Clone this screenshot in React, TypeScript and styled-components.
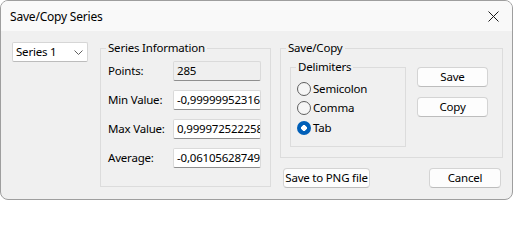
import React, { useState } from 'react'
import styled, { createGlobalStyle, css } from 'styled-components'

const GlobalStyle = createGlobalStyle`
  html, body {
    margin: 0;
    padding: 0;
    background: #ffffff;
  }
  body {
    font-family: "Noto Sans", "Liberation Sans", sans-serif;
    font-size: 11.5px;
    letter-spacing: -0.2px;
    color: #000000;
  }
`

type Delimiter = 'semicolon' | 'comma' | 'tab'

const infoRows = [
  { label: 'Points:', value: '285', readOnly: true },
  { label: 'Min Value:', value: '-0,99999952316', readOnly: false },
  { label: 'Max Value:', value: '0,999972522258', readOnly: false },
  { label: 'Average:', value: '-0,06105628749', readOnly: false }
]

const delimiters: { key: Delimiter, label: string }[] = [
  { key: 'semicolon', label: 'Semicolon' },
  { key: 'comma', label: 'Comma' },
  { key: 'tab', label: 'Tab' }
]

const App = () => {
  const [delimiter, setDelimiter] = useState<Delimiter>('tab')

  return (
    <>
      <GlobalStyle />
      <Window>
        <TitleBar>
          <TitleText>Save/Copy Series</TitleText>
          <CloseButton>
            <svg width="11" height="11" viewBox="0 0 11 11">
              <path d="M0.5 0.5 L10.5 10.5 M10.5 0.5 L0.5 10.5" stroke="#1a1a1a" strokeWidth="1" fill="none" />
            </svg>
          </CloseButton>
        </TitleBar>
        <Body>
          <Combo>
            <span>Series 1</span>
            <svg width="9" height="5" viewBox="0 0 9 5">
              <path d="M0.5 0.5 L4.5 4.5 L8.5 0.5" stroke="#606060" strokeWidth="1" fill="none" />
            </svg>
          </Combo>

          <InfoGroup>
            <Legend>Series Information</Legend>
            <InfoGrid>
              {infoRows.map(row => (
                <React.Fragment key={row.label}>
                  <FieldLabel>{row.label}</FieldLabel>
                  <TextBox readOnly={row.readOnly}>{row.value}</TextBox>
                </React.Fragment>
              ))}
            </InfoGrid>
          </InfoGroup>

          <RightColumn>
            <SaveGroup>
              <Legend>Save/Copy</Legend>
              <SaveContent>
                <DelimiterGroup>
                  <Legend>Delimiters</Legend>
                  <RadioList>
                    {delimiters.map(d => (
                      <RadioRow key={d.key} onClick={() => setDelimiter(d.key)}>
                        <RadioCircle checked={delimiter === d.key} />
                        <span>{d.label}</span>
                      </RadioRow>
                    ))}
                  </RadioList>
                </DelimiterGroup>
                <ButtonColumn>
                  <Button width={71}>Save</Button>
                  <Button width={71}>Copy</Button>
                </ButtonColumn>
              </SaveContent>
            </SaveGroup>
            <BottomRow>
              <Button width={87}>Save to PNG file</Button>
              <Button width={72}>Cancel</Button>
            </BottomRow>
          </RightColumn>
        </Body>
      </Window>
    </>
  )
}

const Window = styled.div`
  width: 513px;
  height: 200px;
  box-sizing: border-box;
  border: 1px solid #9e9e9e;
  border-radius: 8px;
  overflow: hidden;
  background: #f0f0f0;
  display: flex;
  flex-direction: column;
`

const TitleBar = styled.div`
  height: 30px;
  flex-shrink: 0;
  background: #f9f9f9;
  display: flex;
  align-items: center;
  justify-content: space-between;
  padding: 0 9px 0 9px;
`

const TitleText = styled.div`
  font-size: 12px;
  line-height: 14px;
  padding-top: 1px;
`

const CloseButton = styled.div`
  width: 11px;
  height: 11px;
  display: flex;
  margin-right: 4px;
  margin-top: 1px;
`

const Body = styled.div`
  flex: 1;
  display: flex;
  align-items: flex-start;
  padding: 10px 0 0 11px;
`

const Combo = styled.div`
  width: 76px;
  height: 20px;
  box-sizing: border-box;
  margin-top: 1px;
  margin-right: 12px;
  background: #ffffff;
  border: 1px solid #d6d6d6;
  border-bottom-color: #bcbcbc;
  border-radius: 2px;
  display: flex;
  align-items: center;
  justify-content: space-between;
  padding: 0 4px 0 3px;
  line-height: 14px;
`

const groupBase = css`
  margin: 0;
  padding: 0;
  border: 1px solid #dcdcdc;
  box-sizing: border-box;
  min-width: 0;
`

const Legend = styled.legend`
  margin-left: 5px;
  padding: 0 2px;
  line-height: 14px;
`

const InfoGroup = styled.fieldset`
  ${groupBase}
  width: 171px;
  height: 146px;
  margin-right: 9px;
`

const InfoGrid = styled.div`
  display: grid;
  grid-template-columns: 65px 88px;
  grid-auto-rows: 20px;
  row-gap: 9px;
  padding: 6px 0 0 7px;
  align-items: center;
`

const FieldLabel = styled.div`
  line-height: 14px;
`

type TextBoxProps = {
  readOnly: boolean
}

const TextBox = styled.div<TextBoxProps>`
  height: 20px;
  box-sizing: border-box;
  background: ${({ readOnly }) => (readOnly ? '#efefef' : '#ffffff')};
  border: 1px solid #dadada;
  border-bottom-color: #8f8f8f;
  border-radius: 2px;
  padding: 0 3px;
  line-height: 17px;
  white-space: nowrap;
  overflow: hidden;
`

const RightColumn = styled.div`
  display: flex;
  flex-direction: column;
  width: 223px;
`

const SaveGroup = styled.fieldset`
  ${groupBase}
  width: 223px;
  height: 117px;
`

const SaveContent = styled.div`
  display: flex;
  align-items: flex-start;
  padding: 5px 0 0 9px;
`

const DelimiterGroup = styled.fieldset`
  ${groupBase}
  width: 116px;
  height: 87px;
  margin-right: 11px;
`

const RadioList = styled.div`
  display: flex;
  flex-direction: column;
  padding: 5px 0 0 6px;
`

const RadioRow = styled.div`
  height: 19.5px;
  display: flex;
  align-items: center;
  gap: 2px;
  line-height: 14px;
  cursor: default;
`

type RadioCircleProps = {
  checked: boolean
}

const RadioCircle = styled.div<RadioCircleProps>`
  width: 14px;
  height: 14px;
  box-sizing: border-box;
  border-radius: 50%;
  flex-shrink: 0;
  ${({ checked }) => checked ? css`
    background: radial-gradient(circle, #ffffff 0 2.6px, #005fb8 3px);
  ` : css`
    background: #f6f6f6;
    border: 1px solid #5f5f5f;
  `}
`

const ButtonColumn = styled.div`
  display: flex;
  flex-direction: column;
  gap: 10px;
  padding-top: 7px;
`

type ButtonProps = {
  width: number
}

const Button = styled.div<ButtonProps>`
  width: ${({ width }) => width}px;
  height: 20px;
  box-sizing: border-box;
  background: #fdfdfd;
  border: 1px solid #d4d4d4;
  border-bottom-color: #bdbdbd;
  border-radius: 4px;
  display: flex;
  align-items: center;
  justify-content: center;
  line-height: 14px;
  white-space: nowrap;
`

const BottomRow = styled.div`
  display: flex;
  justify-content: space-between;
  padding: 10px 2px 0 3px;
`

export default App
